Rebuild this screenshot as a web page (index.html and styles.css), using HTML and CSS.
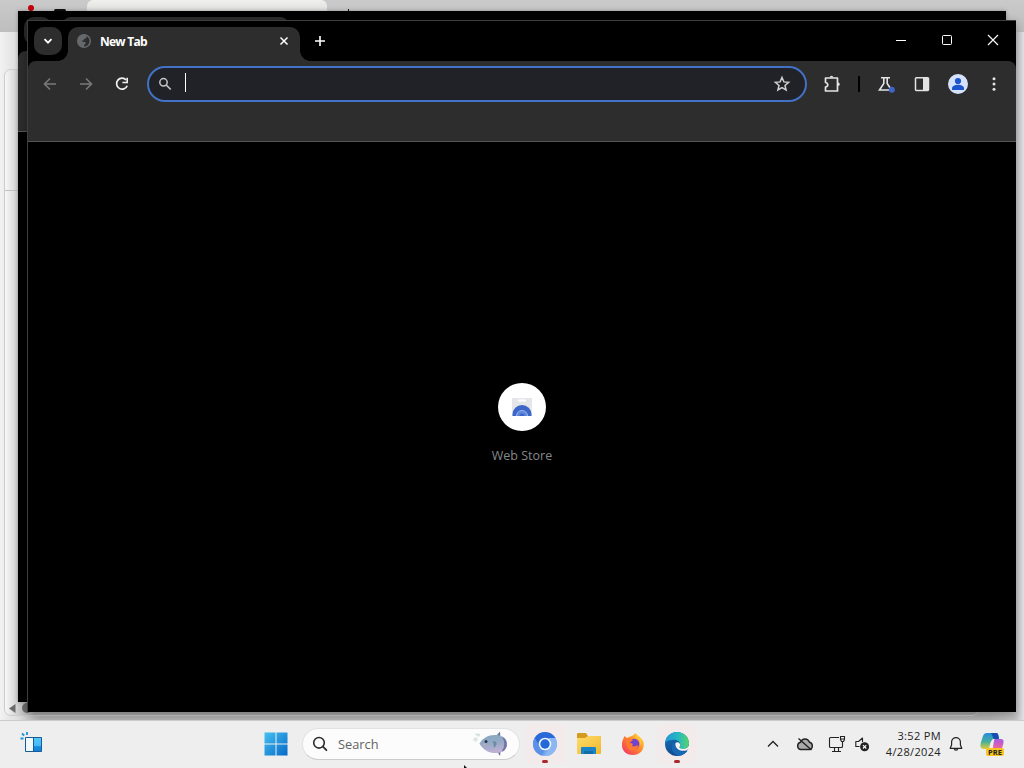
FILE: index.html
```html
<!DOCTYPE html>
<html lang="en">
<head>
    <meta charset="UTF-8">
    <meta name="viewport" content="width=device-width, initial-scale=1.0">
    <title>New Tab</title>
    <link rel="stylesheet" href="styles.css">
</head>
<body>
<div class="desktop">
    <!-- light window at the very back -->
    <div class="backdrop">
        <div class="backdrop-top">
            <span class="rec-dot"></span>
            <span class="backdrop-mark"></span>
            <span class="backdrop-tab"></span>
            <span class="backdrop-plus"></span>
        </div>
        <div class="backdrop-page"></div>
    </div>
    <svg class="scroll-arrows" width="22" height="12" viewBox="0 0 22 12">
        <path d="M7.500 2v9L1 6.500z" fill="#6b6b6b"/>
        <circle cx="19" cy="6" r="5" fill="#6b6b6b"/>
    </svg>

    <!-- second browser window -->
    <div class="window window-back">
        <div class="back-strip">
            <span class="back-btn"></span>
            <span class="back-tab"></span>
        </div>
        <div class="back-toolbar"></div>
    </div>

    <!-- active browser window -->
    <div class="window window-front">
        <div class="titlebar">
            <button class="tab-search">
                <svg width="12" height="12" viewBox="0 0 12 12"><path d="M2.500 4.200 6 7.700l3.500-3.500" fill="none" stroke="#fff" stroke-width="1.800"/></svg>
            </button>
            <div class="tab">
                <svg width="16" height="16" viewBox="0 0 16 16">
                    <circle cx="8" cy="8" r="6.300" fill="none" stroke="#66696c" stroke-width="1.500"/>
                    <path d="M2 5.500C3 3 5 1.700 8.500 1.700l2 1.300v2L8 6v1.500H5.500L7 9h2.500v2L8 12v2.500C4.500 14 2 11.500 1.700 8z" fill="#66696c"/>
                </svg>
                <span class="tab-title">New Tab</span>
                <svg width="10" height="10" viewBox="0 0 10 10"><path d="M1.500 1.500l7 7m0-7l-7 7" stroke="#fff" stroke-width="1.500"/></svg>
            </div>
            <button class="new-tab">
                <svg width="12" height="12" viewBox="0 0 12 12"><path d="M6 1v10M1 6h10" stroke="#fff" stroke-width="1.600"/></svg>
            </button>
            <div class="controls">
                <button><svg width="12" height="12" viewBox="0 0 12 12"><path d="M1 6.500h10" stroke="#fff"/></svg></button>
                <button><svg width="12" height="12" viewBox="0 0 12 12"><rect x="1.500" y="1.500" width="9" height="9" rx="1" fill="none" stroke="#fff"/></svg></button>
                <button><svg width="12" height="12" viewBox="0 0 12 12"><path d="M1 1l10 10M11 1L1 11" stroke="#fff" stroke-width="1.100"/></svg></button>
            </div>
        </div>

        <div class="toolbar">
            <div class="tool-row">
                <button class="tool"><svg width="16" height="16" viewBox="0 0 16 16"><path d="M14 8H3M8 2.500L2.500 8 8 13.500" fill="none" stroke="#77797b" stroke-width="1.600"/></svg></button>
                <button class="tool"><svg width="16" height="16" viewBox="0 0 16 16"><path d="M2 8h11M8 2.500L13.500 8 8 13.500" fill="none" stroke="#77797b" stroke-width="1.600"/></svg></button>
                <button class="tool"><svg width="16" height="16" viewBox="0 0 16 16"><path d="M12.200 4A5.500 5.500 0 1 0 13.200 9.700" fill="none" stroke="#f1f1f1" stroke-width="1.700"/><path d="M14 1.700v5.600H8.400V5.700h4V1.700z" fill="#f1f1f1"/></svg></button>
                <div class="omnibox">
                    <svg width="14" height="14" viewBox="0 0 14 14"><circle cx="5.500" cy="5.300" r="3.700" fill="none" stroke="#c5c5c5" stroke-width="1.500"/><path d="M8.200 8l4.500 4.500" stroke="#c5c5c5" stroke-width="1.700"/></svg>
                    <span class="caret"></span>
                    <svg class="star" width="18" height="18" viewBox="0 0 18 18"><path d="M9 2.500l1.900 4.400 4.700.4-3.600 3.100 1.100 4.600L9 12.600 4.900 15 6 10.400 2.400 7.300l4.700-.4z" fill="none" stroke="#d0d0d0" stroke-width="1.500"/></svg>
                </div>
                <button class="tool ext"><svg width="20" height="20" viewBox="0 0 20 20"><path d="M3.500 4h12v13h-12v-4c3-.5 3-4 0-4.500z" fill="none" stroke="#e3e3e3" stroke-width="1.700" stroke-linejoin="round"/><path d="M7.700 3.500a1.800 1.800 0 0 1 3.600 0zM16 8.400a1.800 1.800 0 0 1 0 3.600z" fill="#e3e3e3"/></svg></button>
                <span class="divider"></span>
                <button class="tool"><svg width="20" height="20" viewBox="0 0 20 20"><path d="M5 3.800h9M7.800 4v5.500L3.500 16h12l-4.300-6.500V4" fill="none" stroke="#e3e3e3" stroke-width="1.600"/><circle cx="15.800" cy="15.800" r="3" fill="#3f65c8"/></svg></button>
                <button class="tool"><svg width="16" height="16" viewBox="0 0 16 16"><rect x="1.500" y="1.700" width="13" height="12.700" rx=".8" fill="none" stroke="#e3e3e3" stroke-width="1.500"/><path d="M9 2h5.500v12H9z" fill="#e3e3e3"/></svg></button>
                <button class="tool"><svg width="20" height="20" viewBox="0 0 20 20"><circle cx="10" cy="10" r="10" fill="#d6e2fb"/><circle cx="10" cy="7" r="3.100" fill="#1d56cc"/><path d="M4 15.900v-1.400c0-2.600 3-3.700 6-3.700s6 1.100 6 3.700v1.400z" fill="#1d56cc"/></svg></button>
                <button class="tool"><svg width="16" height="16" viewBox="0 0 16 16"><g fill="#e3e3e3"><circle cx="8" cy="2.800" r="1.500"/><circle cx="8" cy="8" r="1.500"/><circle cx="8" cy="13.200" r="1.500"/></g></svg></button>
            </div>
        </div>

        <div class="page">
            <div class="shortcut">
                <div class="shortcut-icon">
                    <svg width="22" height="22" viewBox="0 0 22 22">
                        <path d="M1 2h20v18H1z" fill="#e4e6ea"/>
                        <path d="M8 4.500h6" stroke="#fff" stroke-width="1.800" stroke-linecap="round"/>
                        <path d="M1.500 20v-1.500a9.500 9.500 0 0 1 19 0V20z" fill="#3c66c8"/>
                        <path d="M5.500 20a5.500 5.500 0 0 1 11 0" fill="#5d86df" stroke="#9cb7ef"/>
                        <path d="M8.500 20a2.500 2.500 0 0 1 5 0z" fill="#3c66c8"/>
                    </svg>
                </div>
                <span>Web Store</span>
            </div>
        </div>
    </div>

    <div class="taskbar">
        <div class="widgets">
            <svg width="24" height="24" viewBox="0 0 24 24">
                <defs><linearGradient id="pane" x2="0" y2="1"><stop stop-color="#55c7fa"/><stop offset=".6" stop-color="#43b9f6"/><stop offset=".65" stop-color="#168be0"/><stop offset="1" stop-color="#1283da"/></linearGradient></defs>
                <path d="M5.500 5.500h8v14h-8z" fill="#f0f9fc"/><path d="M13.500 5.500h8v14h-8z" fill="url(#pane)"/>
                <path d="M5.500 5.500h16v14h-16zM13.500 5.500v14" fill="none" stroke="#175c98"/>
                <path d="M7 0v3M2 1.500L4.200 3.500M.5 6.500h3" stroke="#1993dc" stroke-width="1.800"/>
            </svg>
        </div>
        <div class="start">
            <svg width="24" height="24" viewBox="0 0 24 24">
                <defs><linearGradient id="win" x2="1" y2="1"><stop stop-color="#45c1f1"/><stop offset="1" stop-color="#0668c7"/></linearGradient></defs>
                <path d="M.5.500h11v11H.5zM12.500.500h11v11h-11zM.5 12.500h11v11H.5zM12.500 12.500h11v11h-11z" fill="url(#win)"/>
            </svg>
        </div>
        <div class="search">
            <svg width="16" height="16" viewBox="0 0 16 16"><circle cx="7" cy="6.800" r="5.300" fill="none" stroke="#2b2b2b" stroke-width="1.600"/><path d="M10.900 10.700l3.500 3.500" stroke="#2b2b2b" stroke-width="1.800" stroke-linecap="round"/></svg>
            <span>Search</span>
            <svg class="fish" width="36" height="26" viewBox="0 0 36 26">
                <defs><linearGradient id="fish" x2=".3" y2="1"><stop stop-color="#86a9c2"/><stop offset=".5" stop-color="#93a9c4"/><stop offset="1" stop-color="#bdb1d4"/></linearGradient></defs>
                <path d="M23 5l4-4.500.5 6.500zM23 19l4 6 1-7z" fill="#6d7c96"/>
                <path d="M6.500 12.500C10 6.500 16 3.500 23 4c7 .5 11 4 11 9s-4 8.500-10 9c-8 .5-14-3-17.500-9.500z" fill="url(#fish)"/>
                <path d="M29 5.500c6 3 7 12 0 15.500 1-2 0-3 2-4.500-1-2 1-3 0-5 0-2-1-4-2-6z" fill="#7275a7"/>
                <path d="M20 10c4 0 5 3 1 7z" fill="#6f8ba5"/>
                <circle cx="13" cy="10.500" r="1.500" fill="#26384b"/><circle cx="11.500" cy="13.500" r="1.200" fill="#c9a9bd"/>
                <g fill="#dfe9e9" stroke="#c3d3d4" stroke-width=".5"><circle cx="2.500" cy="8.500" r="1.800"/><circle cx="5.500" cy="4" r="1.300"/><circle cx="3.300" cy="3.500" r=".7"/></g>
            </svg>
        </div>
        <div class="apps">
            <div class="app running">
                <svg width="26" height="26" viewBox="0 0 26 26">
                    <circle cx="13" cy="13" r="12" fill="#75a6ed"/>
                    <path d="M2.600 7A12 12 0 0 1 23.400 7H13l-5.200 9z" fill="#2b69d8"/>
                    <path d="M2.600 7l5.200 9 5.200 3-3 5.600A12 12 0 0 1 2.600 7z" fill="#5b91e9"/>
                    <path d="M23.400 7A12 12 0 0 1 12 25l6.200-9L17 7z" fill="#8db7f3"/>
                    <circle cx="13" cy="13" r="6.300" fill="#edf5ff"/><circle cx="13" cy="13" r="4.700" fill="#2469d7"/>
                </svg>
            </div>
            <div class="app">
                <svg width="26" height="26" viewBox="0 0 26 26">
                    <defs><linearGradient id="folder" x2="1" y2="1"><stop stop-color="#ffdc6b"/><stop offset="1" stop-color="#f1b72e"/></linearGradient></defs>
                    <path d="M1 3a1 1 0 0 1 1-1h8l2 3h12a1 1 0 0 1 1 1v6H1z" fill="#d59a20"/>
                    <path d="M1 7h8l3-2h12a1 1 0 0 1 1 1v16a1 1 0 0 1-1 1H2a1 1 0 0 1-1-1z" fill="url(#folder)"/>
                    <path d="M5 23v-6a1 1 0 0 1 1-1h13a1 1 0 0 1 1 1v6z" fill="#1984c8"/><path d="M8 20h9v3H8z" fill="#126da8"/>
                </svg>
            </div>
            <div class="app">
                <svg width="26" height="26" viewBox="0 0 26 26">
                    <defs><linearGradient id="fox" x1="1" x2="0" y2="1"><stop stop-color="#ffe33d"/><stop offset=".45" stop-color="#ff8b2a"/><stop offset="1" stop-color="#f1296b"/></linearGradient></defs>
                    <path d="M4.500 5l2.500 2 2-1c2-1 5-1 6-4 2 2 7 5 8.500 9 1.500 7-3 13-10.500 13C6 24 1.500 19.500 2 13c.2-4 1.500-5 2.500-8z" fill="url(#fox)"/>
                    <circle cx="14" cy="13" r="5.300" fill="#7044ce"/>
                    <path d="M6 8c3-1 5 0 7 1-1 2-3 1-3 3 2 0 4 1 2 3 2 1 4 0 6-1 0 5-6 7-9 4-3-3-3-6-3-10z" fill="#ff792e"/>
                    <path d="M15 6c4 1 6 4 5 9 3-6 1-9-4-11z" fill="#ffc638"/>
                </svg>
            </div>
            <div class="app running">
                <svg width="26" height="26" viewBox="0 0 26 26">
                    <defs>
                        <linearGradient id="edge1"><stop stop-color="#2297d8"/><stop offset=".55" stop-color="#28b8c1"/><stop offset="1" stop-color="#55d46c"/></linearGradient>
                        <linearGradient id="edge2" x2=".6" y2="1"><stop stop-color="#137bbf"/><stop offset="1" stop-color="#123f86"/></linearGradient>
                    </defs>
                    <circle cx="13" cy="13" r="12" fill="url(#edge2)"/>
                    <path d="M1 12C2 5 7 1 13 1c7 0 12 5 12 11 0 4-3 6-6 6-4 0-4-1-3-3 1-5-4-7-8-6-3 0-6 1-7 3z" fill="url(#edge1)"/>
                    <path d="M10 11c-5 5-1 13 5 13.700 4-.2 7-2.700 8.500-5C17 22 11 18 11 14z" fill="#1668b5"/>
                    <path d="M11.500 12c-1 5 4 9.500 11.500 7.300l2.500-3.300 0-3c-1 4-4 5-7 5-3-.3-3.700-1.500-2.500-3 .8-3-2.500-5-4.500-3z" fill="#f5f5f5"/>
                </svg>
            </div>
        </div>
        <div class="tray">
            <svg class="chevron" width="12" height="12" viewBox="0 0 12 12"><path d="M1 8.500l5-5 5 5" fill="none" stroke="#222" stroke-width="1.300"/></svg>
            <svg class="cloud" width="18" height="16" viewBox="0 0 18 16"><path d="M4.500 13.500a3.700 3.700 0 0 1 0-7.200C6 1.800 12 1.800 13.500 6.300a3.700 3.700 0 0 1 0 7.200z" fill="#aaa" stroke="#222" stroke-width="1.400"/><path d="M2.500 2.500l13 11.500" stroke="#222" stroke-width="1.400"/></svg>
            <svg class="network" width="18" height="18" viewBox="0 0 18 18"><path d="M11 2.500H2.500a1 1 0 0 0-1 1v8a1 1 0 0 0 1 1h11a1 1 0 0 0 1-1V8M6.500 13v3M10.500 13v3M4 16.500h9M12.500 1.500h4v3l-1 2h-2l-1-2zM12.500 4h4M14.500 6v3" fill="none" stroke="#222" stroke-width="1.100"/></svg>
            <svg class="speaker" width="16" height="16" viewBox="0 0 16 16"><path d="M5.500 10.500H1.800v-5h2.700L8.500 2v4" fill="none" stroke="#222" stroke-width="1.100" stroke-linejoin="round"/><circle cx="10.600" cy="10.800" r="4.500" fill="#222"/><path d="M8.900 9.100l3.400 3.400m0-3.400l-3.400 3.400" stroke="#fff" stroke-width="1.100"/></svg>
            <div class="clock">3:52 PM<br>4/28/2024</div>
            <svg class="bell" width="14" height="16" viewBox="0 0 14 16"><path d="M1.200 12.300L2.600 9V6a4.400 4.400 0 0 1 8.800 0v3l1.400 3.300zM5.300 12.500a1.700 1.700 0 0 0 3.400 0" fill="none" stroke="#222" stroke-width="1.200" stroke-linejoin="round"/></svg>
            <div class="copilot">
                <svg width="24" height="24" viewBox="0 0 24 24">
                    <defs>
                        <linearGradient id="cp1" x2="0" y2="1"><stop stop-color="#258de0"/><stop offset=".55" stop-color="#48af9b"/><stop offset="1" stop-color="#e4cb36"/></linearGradient>
                        <linearGradient id="cp2" x2="0" y2="1"><stop stop-color="#a65be5"/><stop offset=".6" stop-color="#ef659a"/><stop offset="1" stop-color="#fa9d54"/></linearGradient>
                    </defs>
                    <path d="M7 1h9c2 0 2 1 2.500 3l.5 3h-5c-2 0-3 2-4 5l-1 5H4c-4 0-4-3-3-7l2-6c.700-2 2-3 4-3z" fill="url(#cp1)"/>
                    <path d="M11 1h5c2 0 2 1 2.500 3l.5 3h-4c-2 0-2-1-2.500-3z" fill="#174fae"/>
                    <path d="M15 7h6c3 0 3 3 2 6l-2 6c-1 4-2 4-4 4H9c-2 0-2-1-2.500-5H11c2 0 2-3 2.500-6 .5-3 .5-5 1.500-5z" fill="url(#cp2)"/>
                </svg>
                <span class="pre">PRE</span>
            </div>
        </div>
    </div>

    <svg class="cursor" width="4" height="3" viewBox="0 0 4 3"><path d="M0 0l3 3H0z" fill="#111"/></svg>
</div>
</body>
</html>
```

FILE: styles.css
```css
body {
    margin: 0;
    font-family: "Open Sans", "Noto Sans", sans-serif;
    font-size: 12px;
    overflow: hidden;
}
button {
    padding: 0;
    border: none;
    background: none;
    display: flex;
    align-items: center;
    justify-content: center;
}
svg {
    display: block;
    flex: none;
}
.desktop {
    position: relative;
    width: 1024px;
    height: 768px;
    overflow: hidden;
    background-color: #eee;
}

/* light window behind */
.backdrop {
    height: 720px;
    display: flex;
    flex-direction: column;
    background: linear-gradient(90deg, #f2f2f2 0, #ddd 18px, #b4b4b4 40px, #b4b4b4 990px, #c4c4c6 1016px, #e4e4e8 1024px);
}
.backdrop-top {
    height: 32px;
    display: flex;
    flex: none;
    background: linear-gradient(#c9cac9, #bdbebd);
}
.rec-dot {
    width: 6px;
    height: 6px;
    margin: 5px 0 0 28px;
    border-radius: 50%;
    background-color: #c4000b;
}
.backdrop-mark {
    width: 12px;
    height: 3px;
    margin: 9px 0 0 20px;
    border-radius: 3px;
    background-color: #111;
}
.backdrop-tab {
    width: 240px;
    height: 12px;
    margin-left: 21px;
    border-radius: 6px 6px 0 0;
    background: linear-gradient(#f0f1ef, #dcdddb);
}
.backdrop-plus {
    width: 1px;
    height: 3px;
    margin: 9px 0 0 21px;
    background-color: #111;
}
.backdrop-page {
    flex: 1;
    margin: 37px 45px 4px 4px;
    border: 1px solid #ccc;
    border-radius: 7px;
    background: linear-gradient(90deg, #f8f8f8, #ccc 14px, #aaa 30px);
}
.backdrop-page::before {
    content: "";
    display: block;
    width: 13px;
    height: 120px;
    border-bottom: 1px solid #c0c0c0;
}
.scroll-arrows {
    position: absolute;
    left: 8px;
    top: 702px;
}

/* browser windows */
.window {
    position: absolute;
    box-sizing: border-box;
    display: flex;
    flex-direction: column;
    background-color: #000;
}
.window-back {
    left: 18px;
    top: 11px;
    width: 988px;
    height: 691px;
    box-shadow: 0 0 4px rgba(0, 0, 0, 0.3);
}
.back-strip {
    display: flex;
    height: 40px;
    padding-top: 6px;
    box-sizing: border-box;
}
.back-btn {
    width: 28px;
    height: 28px;
    margin-left: 6px;
    border-radius: 10px;
    background-color: #292929;
}
.back-tab {
    width: 229px;
    margin-left: 9px;
    border-radius: 10px 10px 0 0;
    background-color: #2d2d2d;
}
.back-toolbar {
    height: 80px;
    border-radius: 8px 8px 0 0;
    border-bottom: 1px solid #555;
    background-color: #2d2d2d;
}
.window-front {
    left: 27px;
    top: 20px;
    width: 989px;
    height: 692px;
    border: solid #3e3e3e;
    border-width: 1px 0 0 1px;
    box-shadow: 0 3px 9px rgba(0, 0, 0, 0.3);
}
.titlebar {
    display: flex;
    height: 40px;
    flex: none;
}
.tab-search {
    width: 28px;
    height: 28px;
    margin: 6px 6px 0;
    border-radius: 10px;
    background-color: #2d2d2d;
}
.tab {
    position: relative;
    box-sizing: border-box;
    display: flex;
    align-items: center;
    width: 232px;
    height: 34px;
    margin-top: 6px;
    padding: 0 11px 6px 8px;
    border-radius: 10px 10px 0 0;
    background-color: #2d2d2d;
}
/* curved feet of the active tab */
.tab::before,
.tab::after {
    content: "";
    position: absolute;
    bottom: 0;
    width: 10px;
    height: 10px;
}
.tab::before {
    left: -10px;
    background: radial-gradient(circle at 0 0, transparent 9.5px, #2d2d2d 10px);
}
.tab::after {
    right: -10px;
    background: radial-gradient(circle at 100% 0, transparent 9.5px, #2d2d2d 10px);
}
.tab-title {
    flex: 1;
    margin-left: 8px;
    color: #fff;
    font-weight: bold;
    font-size: 12px;
    letter-spacing: -0.75px;
}
.new-tab {
    width: 28px;
    height: 28px;
    margin: 6px 0 0 6px;
}
.controls {
    display: flex;
    height: 38px;
    margin-left: auto;
}
.controls button {
    width: 46px;
}
.toolbar {
    height: 80px;
    flex: none;
    border-bottom: 1px solid #555;
    border-radius: 8px 8px 0 0;
    background-color: #2d2d2d;
}
.tool-row {
    display: flex;
    align-items: center;
    height: 46px;
    padding: 0 4px;
}
.tool {
    width: 36px;
    height: 36px;
    flex: none;
}
.omnibox {
    flex: 1;
    display: flex;
    align-items: center;
    box-sizing: border-box;
    height: 36px;
    margin: 0 7px;
    padding: 0 14px 0 9px;
    border: 2px solid #4271c5;
    border-radius: 18px;
    background-color: #202227;
}
.caret {
    width: 1px;
    height: 19px;
    margin: 0 0 3px 13px;
    background-color: #fff;
}
.star {
    margin-left: auto;
}
.divider {
    width: 2px;
    height: 16px;
    margin: 0 8px;
    background-color: #000;
}
.page {
    flex: 1;
    display: flex;
    justify-content: center;
    align-items: flex-start;
    background-color: #000;
}
.shortcut {
    display: flex;
    flex-direction: column;
    align-items: center;
    gap: 16px;
    margin-top: 241px;
    color: #85888b;
    font-size: 12.5px;
    line-height: 18px;
}
.shortcut-icon {
    display: flex;
    align-items: center;
    justify-content: center;
    width: 48px;
    height: 48px;
    border-radius: 50%;
    background-color: #fff;
}

/* taskbar */
.taskbar {
    position: relative;
    box-sizing: border-box;
    display: flex;
    align-items: center;
    height: 48px;
    padding: 0 20px 1px;
    border-top: 1px solid #ccc;
    background-color: #eee;
    color: #222;
}
.widgets {
    width: 244px;
}
.start {
    width: 38px;
}
.search {
    box-sizing: border-box;
    display: flex;
    align-items: center;
    width: 218px;
    height: 32px;
    padding: 0 10px 0 9px;
    border: 1px solid #e2e2e2;
    border-bottom-color: #ccc;
    border-radius: 16px;
    background-color: #fcfcfc;
}
.search span {
    margin-left: 10px;
    color: #626262;
    font-size: 12.8px;
}
.fish {
    margin-left: auto;
}
.apps {
    display: flex;
    gap: 4px;
    margin-left: 5px;
}
.app {
    position: relative;
    display: flex;
    align-items: center;
    justify-content: center;
    width: 40px;
    height: 40px;
    border-radius: 5px;
}
.running {
    background-color: #f3eaeb;
}
.running::after {
    content: "";
    position: absolute;
    bottom: 1px;
    left: 17px;
    width: 6px;
    height: 3px;
    border-radius: 2px;
    background-color: #a8292d;
}
.tray {
    display: flex;
    align-items: center;
    margin-left: auto;
}
.cloud {
    margin-left: 17px;
}
.network {
    margin-left: 14px;
}
.speaker {
    margin-left: 8px;
}
.clock {
    width: 64px;
    margin-left: 7px;
    font-size: 11px;
    letter-spacing: 0.35px;
    line-height: 16px;
    text-align: right;
    white-space: nowrap;
}
.bell {
    margin-left: 8px;
}
.copilot {
    position: relative;
    margin-left: 17px;
}
.pre {
    position: absolute;
    left: 6px;
    bottom: 0;
    width: 18px;
    border-radius: 2px;
    background-color: #f8c51f;
    color: #222;
    font-size: 7.5px;
    font-weight: bold;
    line-height: 8px;
    text-align: center;
}
.cursor {
    position: absolute;
    left: 464px;
    top: 765px;
}
```
